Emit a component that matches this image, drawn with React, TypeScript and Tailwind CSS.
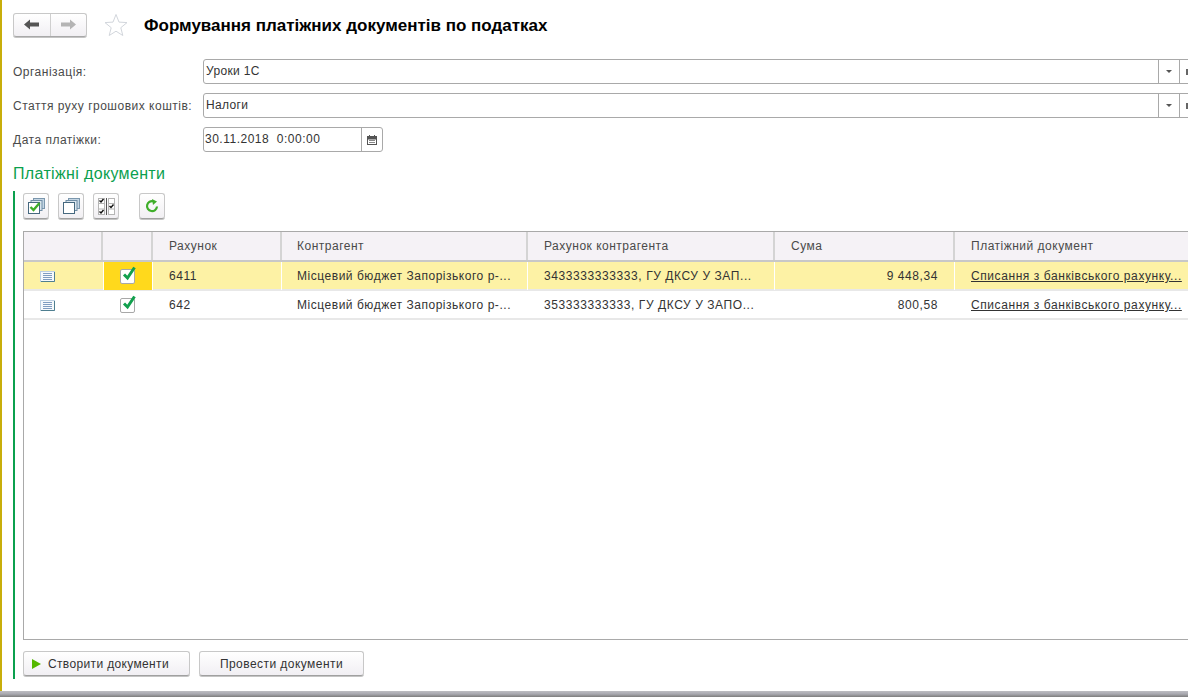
const font = { fontFamily: '"Liberation Sans", Arial, sans-serif' };

const columns = "grid-cols-[79px_50px_129px_246px_247px_180px_260px]";

const rows = [
  {
    account: "6411",
    contractor: "Місцевий бюджет Запорізького р-...",
    contractorAccount: "3433333333333, ГУ ДКСУ У ЗАП...",
    sum: "9 448,34",
    selected: true,
  },
  {
    account: "642",
    contractor: "Місцевий бюджет Запорізького р-...",
    contractorAccount: "353333333333, ГУ ДКСУ У ЗАПО...",
    sum: "800,58",
    selected: false,
  },
];

const headers = ["", "", "Рахунок", "Контрагент", "Рахунок контрагента", "Сума", "Платіжний документ"];

const StarIcon = () => (
  <svg width="24" height="24" viewBox="0 0 24 24" fill="#fff" stroke="#d2d6dc" strokeWidth="1">
    <path d="M12 1.5l3 7.6 8 .5-6.2 5.1 2 7.8L12 18.2l-6.8 4.3 2-7.8L1 9.6l8-.5z" />
  </svg>
);

const DocIcon = () => (
  <svg width="15" height="11" viewBox="0 0 15 11">
    <rect x="0.5" y="0.5" width="14" height="10" fill="#f6f9fc" stroke="#bdd0e2" />
    <path d="M14.5 1v9.5H1" fill="none" stroke="#4f7f90" />
    <path d="M3 2.5h9M3 4.5h9M3 6.5h9M3 8.5h9" stroke="#7f9cc0" />
  </svg>
);

const CheckBox = () => (
  <div className="relative w-[15px] h-[15px] rounded-[2px] border border-[#a8a8a8] bg-white">
    <svg className="absolute left-[1px] top-[-5px]" width="15" height="16" viewBox="0 0 15 16">
      <path d="M2 9.5l3.5 3.5L12.5 2.5" fill="none" stroke="#12a04e" strokeWidth="3" />
    </svg>
  </div>
);

const ToolButton = ({ children, className = "" }: { children: React.ReactNode; className?: string }) => (
  <button className={`flex items-center justify-center w-[26px] h-[26px] rounded-[3px] border border-[#c8c8c8] border-b-[#a0a0a0] bg-gradient-to-b from-white to-[#f1eff3] shadow-[0_1px_0_#c4c4c4] ${className}`}>
    {children}
  </button>
);

const FormRow = ({ label, value }: { label: string; value: string }) => (
  <div className="flex items-center h-[25px] mb-[9px]">
    <span className="w-[190px] text-[12px] tracking-[0.5px] text-[#4a4a4a]">{label}</span>
    <div className="flex flex-1 -mr-[22px] h-[25px] border border-[#a9a9a9] rounded-l-[3px] bg-white">
      <span className="flex-1 pl-[2px] leading-[23px] text-[12px] tracking-[0.35px] text-[#333]">{value}</span>
      <div className="flex items-center justify-center w-[21px] border-l border-[#a9a9a9]">
        <span className="w-0 h-0 border-x-[3px] border-x-transparent border-t-[3px] border-t-[#555]" />
      </div>
      <div className="w-[30px] border-l border-[#a9a9a9] pl-[6px] pt-[9px]">
        <span className="block w-[3px] h-[6px] bg-[#666]" />
      </div>
    </div>
  </div>
);

export default function App() {
  return (
    <div style={font} className="flex flex-col w-[1188px] h-[697px] overflow-hidden bg-white">
      <div className="flex flex-1 min-h-0 border-l-[2px] border-[#c8ae0a]">
        <div className="flex-1 min-w-0 pl-[11px] pt-[12px]">
          {/* Header */}
          <div className="flex items-center h-[25px] mb-[22px]">
            <div className="flex w-[74px] h-[24px] rounded-[3px] border border-[#c8c8c8] border-b-[#a8a8a8] bg-gradient-to-b from-white to-[#f1eff3] shadow-[0_1px_0_#c4c4c4]">
              <div className="flex flex-1 items-center justify-center border-r border-[#cfcfcf]">
                <svg width="15" height="11" viewBox="0 0 15 11">
                  <path d="M0 5.5L6 .5v3h9v4H6v3z" fill="#555" />
                </svg>
              </div>
              <div className="flex flex-1 items-center justify-center">
                <svg width="15" height="11" viewBox="0 0 15 11">
                  <path d="M15 5.5L9 .5v3H0v4h9v3z" fill="#b4b4b4" />
                </svg>
              </div>
            </div>
            <div className="ml-[17px] mr-[16px]">
              <StarIcon />
            </div>
            <h1 className="pt-[2px] text-[17px] font-bold text-black whitespace-nowrap">
              Формування платіжних документів по податках
            </h1>
          </div>

          {/* Form */}
          <FormRow label="Організація:" value="Уроки 1С" />
          <FormRow label="Стаття руху грошових коштів:" value="Налоги" />
          <div className="flex items-center h-[25px]">
            <span className="w-[190px] text-[12px] tracking-[0.5px] text-[#4a4a4a]">Дата платіжки:</span>
            <div className="flex w-[180px] h-[25px] rounded-[3px] border border-[#a9a9a9]">
              <span className="flex-1 pl-[1px] leading-[23px] text-[12px] tracking-[0.5px] text-[#333] whitespace-pre">
                30.11.2018  0:00:00
              </span>
              <div className="flex items-center justify-center w-[21px] border-l border-[#a9a9a9]">
                <svg width="10" height="10" viewBox="0 0 10 10">
                  <rect x="0.5" y="1.5" width="9" height="8" fill="#fff" stroke="#555" />
                  <path d="M0 2h10v2H0zM2.5 0v2M7.5 0v2" fill="#555" stroke="#555" />
                  <path d="M2 5.5h6M2 7.5h6" stroke="#888" />
                </svg>
              </div>
            </div>
          </div>

          {/* Section */}
          <h2 className="mt-[12px] h-[19px] text-[16px] leading-[19px] tracking-[0.35px] text-[#0ba04e]">Платіжні документи</h2>
          <div className="flex flex-col h-[488px] mt-[8px] border-l-[2px] border-[#0ba04e] pl-[8px] pt-[2px]">
            <div className="flex gap-[9px] h-[26px] mb-[12px]">
              <ToolButton>
                <svg width="17" height="16" viewBox="0 0 17 16" fill="none">
                  <rect x="5.5" y="0.5" width="11" height="10" fill="#c5d6e4" stroke="#7b97ad" />
                  <rect x="3" y="2.5" width="11" height="10" fill="#dbe6ee" stroke="#6f8da5" />
                  <rect x="0.5" y="4.5" width="11" height="11" fill="#fff" stroke="#46687f" />
                  <path d="M2.5 9l3 3 6-7" stroke="#3fae2a" strokeWidth="2.4" />
                </svg>
              </ToolButton>
              <ToolButton>
                <svg width="17" height="16" viewBox="0 0 17 16" fill="none">
                  <rect x="5.5" y="0.5" width="11" height="10" fill="#c5d6e4" stroke="#7b97ad" />
                  <rect x="3" y="2.5" width="11" height="10" fill="#dbe6ee" stroke="#6f8da5" />
                  <rect x="0.5" y="4.5" width="11" height="11" fill="#fff" stroke="#46687f" />
                </svg>
              </ToolButton>
              <ToolButton>
                <svg width="17" height="17" viewBox="0 0 17 17" fill="none">
                  <rect x="0.5" y="0.5" width="6" height="16" fill="#fff" stroke="#b5b5b5" />
                  <rect x="10.5" y="0.5" width="6" height="16" fill="#fff" stroke="#b5b5b5" />
                  <path d="M0 5.5h7M0 11h7M10 5.5h7M10 11h7" stroke="#b5b5b5" />
                  <path d="M8.5 0v17" stroke="#555" />
                  <path d="M1.5 2.5l1.5 1.5 2.5-3M1.5 13.5l1.5 1.5 2.5-3M11.5 8l1.5 1.5 2.5-3" stroke="#111" strokeWidth="1.4" />
                </svg>
              </ToolButton>
              <ToolButton className="ml-[11px]">
                <svg width="14" height="14" viewBox="0 0 14 14" fill="none">
                  <path d="M12 7.5A5 5 0 1 1 8.5 2.3" stroke="#3fae2a" strokeWidth="2.2" />
                  <path d="M7 0l5 2.5L8 6z" fill="#3fae2a" />
                </svg>
              </ToolButton>
            </div>

            {/* Table */}
            <div className="flex-1 min-h-0 -mr-[100px] border border-[#a9a9a9] bg-white">
              <div className={`grid ${columns} h-[30px] bg-[#f5f2f6] border-b-[2px] border-[#c8c8c8]`}>
                {headers.map((h, i) => (
                  <div
                    key={i}
                    className={`leading-[28px] text-[12px] tracking-[0.5px] text-[#4a4a4a] border-r-[2px] border-[#d4d4d4] last:border-r-0 ${
                      h === "Контрагент" ? "pl-[15px]" : "pl-[16px]"
                    }`}
                  >
                    {h}
                  </div>
                ))}
              </div>
              {rows.map((r) => {
                const divider = r.selected ? "border-white" : "border-transparent";
                return (
                  <div
                    key={r.account}
                    className={`grid ${columns} h-[29px] border-b-[2px] border-[#e8e8e8] text-[12px] tracking-[0.58px] text-[#333] ${
                      r.selected ? "bg-[#fdf2a5]" : "bg-white"
                    }`}
                  >
                    <div className="flex items-center pl-[16px]">
                      <DocIcon />
                    </div>
                    <div className={`flex items-center justify-center pr-[2px] border-x ${r.selected ? "bg-[#ffd91c] border-white" : "border-transparent"}`}>
                      <CheckBox />
                    </div>
                    <div className={`pl-[16px] leading-[28px] border-r ${divider}`}>{r.account}</div>
                    <div className={`pl-[15px] leading-[28px] tracking-[0.53px] whitespace-nowrap overflow-hidden border-r ${divider}`}>{r.contractor}</div>
                    <div className={`pl-[16px] leading-[28px] whitespace-nowrap overflow-hidden border-r ${divider}`}>{r.contractorAccount}</div>
                    <div className={`pr-[16px] leading-[28px] text-right border-r ${divider}`}>{r.sum}</div>
                    <div className="pl-[16px] leading-[28px] whitespace-nowrap">
                      <span className="underline">Списання з банківського рахунку...</span>
                    </div>
                  </div>
                );
              })}
            </div>

            {/* Footer buttons */}
            <div className="flex gap-[9px] mt-[11px] mb-[3px]">
              <button className="flex items-center w-[167px] h-[25px] pl-[8px] rounded-[3px] border border-[#c8c8c8] border-b-[#a0a0a0] bg-gradient-to-b from-white to-[#f1eff3] shadow-[0_1px_0_#c4c4c4] text-[12px] tracking-[0.35px] text-[#333]">
                <span className="mr-[7px] w-0 h-0 border-y-[5px] border-y-transparent border-l-[9px] border-l-[#55b800]" />
                Створити документи
              </button>
              <button className="w-[165px] h-[25px] rounded-[3px] border border-[#c8c8c8] border-b-[#a0a0a0] bg-gradient-to-b from-white to-[#f1eff3] shadow-[0_1px_0_#c4c4c4] text-[12px] tracking-[0.45px] text-[#333]">
                Провести документи
              </button>
            </div>
          </div>
        </div>
      </div>
      <div className="h-[6px] bg-gradient-to-b from-[#bdbdc2] via-[#a9a9b0] to-[#7d7d7d]" />
    </div>
  );
}
